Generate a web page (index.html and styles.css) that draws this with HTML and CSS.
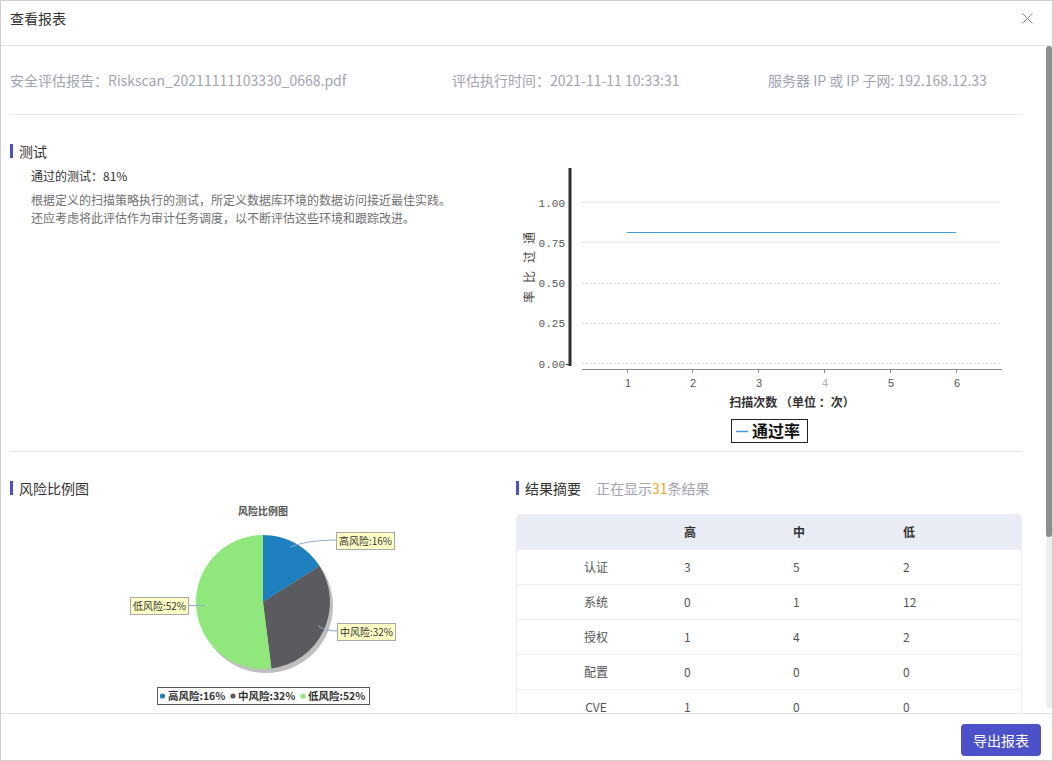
FILE: index.html
```html
<!DOCTYPE html>
<html lang="zh-CN">
<head>
<meta charset="utf-8">
<title>查看报表</title>
<link rel="stylesheet" href="styles.css">
</head>
<body>
<div class="modal">
  <header class="modal-header">
    <span class="modal-title">查看报表</span>
    <button class="close" aria-label="关闭">
      <svg width="11" height="11" viewBox="0 0 11 11"><path d="M0.5 0.5 L10.5 10.5 M10.5 0.5 L0.5 10.5" stroke="#8a8a8a" stroke-width="1" fill="none"/></svg>
    </button>
  </header>

  <main class="modal-body">
    <div class="info-row">
      <span>安全评估报告：Riskscan_20211111103330_0668.pdf</span>
      <span>评估执行时间：2021-11-11 10:33:31</span>
      <span>服务器 IP 或 IP 子网: 192.168.12.33</span>
    </div>

    <section class="row row-top">
      <div class="col col-test">
        <h3 class="sec-title">测试</h3>
        <p class="pass">通过的测试：81%</p>
        <p class="desc">根据定义的扫描策略执行的测试，所定义数据库环境的数据访问接近最佳实践。<br>还应考虑将此评估作为审计任务调度，以不断评估这些环境和跟踪改进。</p>
      </div>
      <div class="col col-chart">
        <svg class="line-chart" width="506" height="291" viewBox="516 160 506 291">
          <g stroke="#dadada" stroke-width="1" stroke-dasharray="2 2">
            <line x1="582" y1="202.5" x2="1002" y2="202.5"/>
            <line x1="582" y1="242.5" x2="1002" y2="242.5"/>
            <line x1="582" y1="283.5" x2="1002" y2="283.5"/>
            <line x1="582" y1="323.5" x2="1002" y2="323.5"/>
            <line x1="582" y1="363.5" x2="1002" y2="363.5"/>
          </g>
          <line x1="570" y1="168" x2="570" y2="366" stroke="#2e2e2e" stroke-width="3"/>
          <line x1="566" y1="364.5" x2="570" y2="364.5" stroke="#2e2e2e" stroke-width="1"/>
          <line x1="582" y1="369.5" x2="1002" y2="369.5" stroke="#8a8a8a" stroke-width="1"/>
          <g stroke="#8a8a8a" stroke-width="1">
            <line x1="627.5" y1="369" x2="627.5" y2="373"/>
            <line x1="692.5" y1="369" x2="692.5" y2="373"/>
            <line x1="758.5" y1="369" x2="758.5" y2="373"/>
            <line x1="824.5" y1="369" x2="824.5" y2="373"/>
            <line x1="890.5" y1="369" x2="890.5" y2="373"/>
            <line x1="956.5" y1="369" x2="956.5" y2="373"/>
          </g>
          <g class="ytick" text-anchor="end">
            <text x="565" y="207">1.00</text>
            <text x="565" y="247">0.75</text>
            <text x="565" y="287">0.50</text>
            <text x="565" y="327">0.25</text>
            <text x="565" y="368">0.00</text>
          </g>
          <g class="xtick" text-anchor="middle">
            <text x="628" y="387">1</text>
            <text x="693" y="387">2</text>
            <text x="759" y="387">3</text>
            <text x="825" y="387" class="dim">4</text>
            <text x="891" y="387">5</text>
            <text x="957" y="387">6</text>
          </g>
          <line x1="627" y1="232.5" x2="956" y2="232.5" stroke="#4a9ad6" stroke-width="1"/>
          <g class="ytitle" text-anchor="middle" dominant-baseline="central">
            <text transform="translate(528 238) rotate(-90)">通</text>
            <text transform="translate(528 257) rotate(-90)">过</text>
            <text transform="translate(528 277) rotate(-90)">比</text>
            <text transform="translate(528 297) rotate(-90)">率</text>
          </g>
          <text class="xtitle" x="792" y="407" text-anchor="middle">扫描次数 （单位 ：次）</text>
          <rect x="731.5" y="419.5" width="76" height="23" fill="#fff" stroke="#222" stroke-width="1"/>
          <line x1="736" y1="431.5" x2="748" y2="431.5" stroke="#4a9ad6" stroke-width="1.5"/>
          <text class="legend" x="752" y="437">通过率</text>
        </svg>
      </div>
    </section>

    <section class="row row-bottom">
      <div class="col">
        <h3 class="sec-title">风险比例图</h3>
        <svg class="pie-chart" width="506" height="220" viewBox="10 498 506 220">
          <text class="pie-title" x="263" y="515" text-anchor="middle">风险比例图</text>
          <circle cx="266" cy="606" r="67" fill="#8a8a8a" opacity="0.55"/>
          <path d="M263 602 L263 535 A67 67 0 0 1 319.57 566.1 Z" fill="#1f80bf"/>
          <path d="M263 602 L319.57 566.1 A67 67 0 0 1 271.4 668.47 Z" fill="#5b5a5f"/>
          <path d="M263 602 L271.4 668.47 A67 67 0 1 1 263 535 Z" fill="#90e87c"/>
          <g fill="none" stroke="#8fa9cc" stroke-width="1">
            <path d="M290 547 Q308 540 336 540"/>
            <path d="M318 626 Q326 631 337 631"/>
            <path d="M188 605.5 L205 605.5"/>
          </g>
          <g class="pie-label">
            <rect x="336.5" y="532.5" width="58" height="17" fill="#ffffc6" stroke="#a8a8a8"/>
            <text x="365.5" y="545" text-anchor="middle">高风险:16%</text>
            <rect x="337.5" y="623.5" width="58" height="17" fill="#ffffc6" stroke="#a8a8a8"/>
            <text x="366.5" y="636" text-anchor="middle">中风险:32%</text>
            <rect x="130.5" y="597.5" width="58" height="17" fill="#ffffc6" stroke="#a8a8a8"/>
            <text x="159.5" y="610" text-anchor="middle">低风险:52%</text>
          </g>
          <rect x="157.5" y="687.5" width="212" height="17" fill="#fff" stroke="#555"/>
          <circle cx="162.5" cy="696" r="2.6" fill="#1f80bf"/>
          <circle cx="233" cy="696" r="2.6" fill="#5b5a5f"/>
          <circle cx="303" cy="696" r="2.6" fill="#90e87c"/>
          <g class="pie-legend">
            <text x="168" y="700">高风险:16%</text>
            <text x="238" y="700">中风险:32%</text>
            <text x="308" y="700">低风险:52%</text>
          </g>
        </svg>
      </div>
      <div class="col">
        <h3 class="sec-title">结果摘要<span class="count">正在显示<em>31</em>条结果</span></h3>
        <div class="table">
          <div class="tr th"><span class="name"></span><span>高</span><span>中</span><span>低</span></div>
          <div class="tr"><span class="name">认证</span><span>3</span><span>5</span><span>2</span></div>
          <div class="tr"><span class="name">系统</span><span>0</span><span>1</span><span>12</span></div>
          <div class="tr"><span class="name">授权</span><span>1</span><span>4</span><span>2</span></div>
          <div class="tr"><span class="name">配置</span><span>0</span><span>0</span><span>0</span></div>
          <div class="tr"><span class="name">CVE</span><span>1</span><span>0</span><span>0</span></div>
        </div>
      </div>
    </section>
  </main>

  <div class="scrollbar"><div class="thumb"></div></div>

  <footer class="modal-footer">
    <button class="btn-primary">导出报表</button>
  </footer>
</div>
</body>
</html>
```

FILE: styles.css
```css
* { box-sizing: border-box; }

html, body {
  margin: 0;
  padding: 0;
  background: #fff;
}

body {
  font-family: "Noto Sans CJK SC", "Noto Sans", sans-serif;
  color: #333;
}

.modal {
  position: relative;
  width: 1053px;
  height: 761px;
  border: 1px solid #cfcfcf;
  display: flex;
  flex-direction: column;
  background: #fff;
  overflow: hidden;
}

.modal-header {
  height: 45px;
  flex: none;
  border-bottom: 1px solid #e3e3e3;
  display: flex;
  align-items: flex-start;
  justify-content: space-between;
  padding: 7px 19px 0 9px;
}

.modal-title {
  font-size: 14px;
  line-height: 20px;
  color: #333;
}

.close {
  border: 0;
  background: none;
  padding: 0;
  margin-top: 5px;
  width: 11px;
  height: 11px;
  display: block;
}
.close svg { display: block; }

.modal-body {
  flex: 1;
  overflow: hidden;
  padding: 0 30px 0 9px;
}

.info-row {
  display: grid;
  grid-template-columns: 442px 316px 1fr;
  padding: 24px 0 24px;
  border-bottom: 1px solid #e8e8e8;
  font-size: 14px;
  line-height: 20px;
  color: #a2a4b3;
  white-space: nowrap;
}

.row {
  display: grid;
  grid-template-columns: 506px 506px;
}

.row-top {
  border-bottom: 1px solid #e8e8e8;
}

.col-test {
  padding-top: 26px;
}

.col-chart {
  padding-top: 45px;
}

.sec-title {
  margin: 0;
  font-size: 14px;
  font-weight: normal;
  line-height: 20px;
  color: #333;
  display: flex;
  align-items: center;
}
.sec-title::before {
  content: "";
  width: 3px;
  height: 14px;
  background: #4d51c9;
  margin-right: 6px;
}

.pass {
  margin: 6px 0 0 21px;
  font-size: 12px;
  line-height: 18px;
  color: #333;
}

.desc {
  margin: 6px 0 0 21px;
  font-size: 12px;
  line-height: 18px;
  color: #6f6f6f;
}

.line-chart, .pie-chart { display: block; }

.ytick text {
  font-family: "Liberation Mono", "DejaVu Sans Mono", monospace;
  font-size: 11px;
  fill: #555;
}
.xtick text {
  font-family: "Liberation Sans", sans-serif;
  font-size: 11px;
  fill: #555;
}
.xtick .dim { fill: #b0b0b0; }

.ytitle text {
  font-family: "Noto Sans CJK SC", sans-serif;
  font-size: 12px;
  fill: #444;
}
.xtitle {
  font-family: "Noto Sans CJK SC", sans-serif;
  font-size: 12px;
  font-weight: 700;
  fill: #333;
}
.legend {
  font-family: "Noto Sans CJK SC", sans-serif;
  font-size: 16px;
  font-weight: 700;
  fill: #111;
}

.row-bottom .col {
  padding-top: 26px;
}

.pie-title {
  font-family: "Noto Sans CJK SC", sans-serif;
  font-size: 10px;
  font-weight: 700;
  fill: #555;
}
.pie-label text {
  font-family: "Noto Sans CJK SC", sans-serif;
  font-size: 10px;
  fill: #333;
}
.pie-legend text {
  font-family: "Noto Sans CJK SC", sans-serif;
  font-size: 10.5px;
  font-weight: 700;
  fill: #333;
}

.count {
  margin-left: 15px;
  color: #a2a4b3;
}
.count em {
  font-style: normal;
  color: #f5a623;
}

.table {
  margin-top: 16px;
  border: 1px solid #ebeef5;
  border-radius: 4px 4px 0 0;
  font-size: 12px;
  color: #555;
}

.tr {
  display: grid;
  grid-template-columns: 158px 109px 110px 1fr;
  height: 35px;
  align-items: center;
  border-top: 1px solid #ebeef5;
}
.tr span {
  padding-left: 9px;
  line-height: 18px;
}
.tr .name {
  padding-left: 0;
  text-align: center;
}

.th {
  height: 34px;
  border-top: 0;
  background: #e9ecf4;
  color: #333;
  font-weight: 700;
}

.scrollbar {
  position: absolute;
  top: 45px;
  right: 0;
  width: 6px;
  height: 662px;
  background: #efefef;
  border-radius: 3px;
}
.thumb {
  height: 491px;
  background: #8e8e8e;
  border-radius: 3px;
}

.modal-footer {
  flex: none;
  height: 47px;
  border-top: 1px solid #e3e3e3;
  display: flex;
  justify-content: flex-end;
  align-items: flex-start;
  padding: 10px 11px 0;
}

.btn-primary {
  width: 80px;
  height: 32px;
  border: 0;
  border-radius: 4px;
  background: #4d51c9;
  color: #fff;
  font-family: "Noto Sans CJK SC", sans-serif;
  font-size: 14px;
  padding: 0;
}
```
